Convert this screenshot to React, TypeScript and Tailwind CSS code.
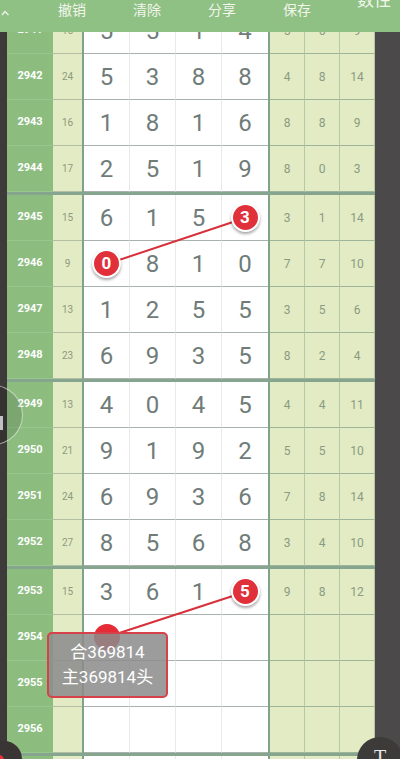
import React from 'react';

type Row = { p: number; sum?: number; d?: number[]; r?: number[]; ball?: [number, number] };

// ball: [column index, digit] drawn as a red marker in that cell
const ROWS: Row[] = [
  { p: 2941, sum: 15, d: [5, 5, 1, 4], r: [5, 6, 9] },
  { p: 2942, sum: 24, d: [5, 3, 8, 8], r: [4, 8, 14] },
  { p: 2943, sum: 16, d: [1, 8, 1, 6], r: [8, 8, 9] },
  { p: 2944, sum: 17, d: [2, 5, 1, 9], r: [8, 0, 3] },
  { p: 2945, sum: 15, d: [6, 1, 5, 3], r: [3, 1, 14], ball: [3, 3] },
  { p: 2946, sum: 9, d: [0, 8, 1, 0], r: [7, 7, 10], ball: [0, 0] },
  { p: 2947, sum: 13, d: [1, 2, 5, 5], r: [3, 5, 6] },
  { p: 2948, sum: 23, d: [6, 9, 3, 5], r: [8, 2, 4] },
  { p: 2949, sum: 13, d: [4, 0, 4, 5], r: [4, 4, 11] },
  { p: 2950, sum: 21, d: [9, 1, 9, 2], r: [5, 5, 10] },
  { p: 2951, sum: 24, d: [6, 9, 3, 6], r: [7, 8, 14] },
  { p: 2952, sum: 27, d: [8, 5, 6, 8], r: [3, 4, 10] },
  { p: 2953, sum: 15, d: [3, 6, 1, 5], r: [9, 8, 12], ball: [3, 5] },
  { p: 2954 },
  { p: 2955 },
  { p: 2956 },
  { p: 2957 },
];

const font = { fontFamily: 'Roboto, "Noto Sans CJK SC", sans-serif' };

function Ball({ n }: { n: number }) {
  return (
    <div className="relative z-10 w-[29px] h-[29px] rounded-full bg-[#e0313b] border-2 border-white shadow-[0_2px_3px_rgba(0,0,0,0.35)] flex items-center justify-center text-white text-[17px] font-bold">
      {n}
    </div>
  );
}

function TableRow({ row }: { row: Row }) {
  const d = row.d ?? [];
  const r = row.r ?? [];
  return (
    <div className="flex h-[46px]">
      <div className="w-[46px] flex items-center justify-center bg-[#8cbd7f] border-b border-[#99c68d] text-white text-[11px] font-bold">
        {row.p}
      </div>
      <div className="w-[29px] flex items-center justify-center bg-[#e3ebc5] border-b border-[#b3bfa4] text-[10px] text-[#8c9a7c]">
        {row.sum ?? ''}
      </div>
      <div className="w-[2px] bg-[#7fa28c]" />
      {[0, 1, 2, 3].map(i => (
        <div
          key={i}
          className={`w-[46px] flex items-center justify-center bg-white border-b border-[#a9b1ad] text-[24px] text-[#6f7c79] ${i < 3 ? 'border-r border-r-[#e7ebe7]' : ''}`}
        >
          {row.ball && row.ball[0] === i ? <Ball n={row.ball[1]} /> : d[i] ?? ''}
        </div>
      ))}
      <div className="w-[2px] bg-[#7fa28c]" />
      {[0, 1, 2].map(i => (
        <div
          key={i}
          className="w-[35px] flex items-center justify-center bg-[#e2ebc3] border-b border-r border-b-[#9fb59a] border-r-[#b5c8a6] text-[12px] text-[#8b9a82]"
        >
          {r[i] ?? ''}
        </div>
      ))}
    </div>
  );
}

export default function App() {
  const groups: Row[][] = [];
  for (let i = 0; i < ROWS.length; i += 4) groups.push(ROWS.slice(i, i + 4));

  return (
    <div className="relative w-[400px] h-[759px] overflow-hidden bg-[#3e3a3a]" style={font}>
      <div className="flex h-full">
        <div className="w-[7px] bg-[#3e3a3a]" />
        <div className="w-[368px] flex flex-col pt-[5px]">
          {groups.map((g, gi) => (
            <div key={gi} className="border-t-[3px] border-[#85a58f]">
              {g.map(row => (
                <TableRow key={row.p} row={row} />
              ))}
            </div>
          ))}
        </div>
        <div className="flex-1 bg-[#4b4949]" />
      </div>

      {/* connecting lines */}
      <svg className="absolute inset-0 pointer-events-none z-0" width={400} height={759}>
        <line x1={107} y1={264} x2={245} y2={218} stroke="#d8303a" strokeWidth={2} />
        <line x1={245} y1={592} x2={107} y2={637} stroke="#d8303a" strokeWidth={2} />
        <circle cx={107} cy={637} r={13} fill="#e52b36" />
      </svg>

      {/* tooltip */}
      <div className="absolute z-20 left-[47px] top-[632px] w-[121px] h-[66px] rounded-[5px] border-2 border-[#d8414a] bg-[rgba(140,140,140,0.86)] flex flex-col items-center justify-center text-white text-[17px] leading-[25px]">
        <span>合369814</span>
        <span>主369814头</span>
      </div>

      {/* top toolbar */}
      <div className="absolute z-20 top-0 left-0 w-full h-[32px] bg-[#8fc084] text-[#f2f6ec] text-[14px]">
        <svg className="absolute left-[1px] top-[9px]" width={9} height={9} viewBox="0 0 9 9">
          <path d="M1 6 L4 2.5 L7.5 6" stroke="#eef4e8" strokeWidth={1.4} fill="none" />
        </svg>
        <div className="flex pl-[58px] gap-[47px]">
          <span>撤销</span>
          <span>清除</span>
          <span>分享</span>
          <span>保存</span>
        </div>
        <span className="absolute left-[357px] top-[-12px] text-[17px]">数性</span>
      </div>

      {/* floating buttons */}
      <div className="absolute z-20 left-[-37px] top-[385px] w-[60px] h-[60px] rounded-full border border-[rgba(255,255,255,0.55)] bg-[rgba(0,0,0,0.12)]" />
      <div className="absolute z-20 left-0 top-[416px] w-[3px] h-[14px] bg-[rgba(255,255,255,0.7)]" />
      <div className="absolute z-20 left-[-14px] top-[741px] w-[36px] h-[36px] rounded-full bg-[#3a3535] overflow-hidden">
        <div className="absolute left-[8px] top-[14px] w-[10px] h-[10px] rounded-full bg-[#e2323c]" />
      </div>
      <div className="absolute z-20 left-[357px] top-[737px] w-[46px] h-[46px] rounded-full bg-[#3d3a3a] flex justify-center pt-[5px]">
        <span className="text-[#e8e8e8] text-[20px]" style={{ fontFamily: '"Liberation Serif", serif' }}>T</span>
      </div>
    </div>
  );
}
